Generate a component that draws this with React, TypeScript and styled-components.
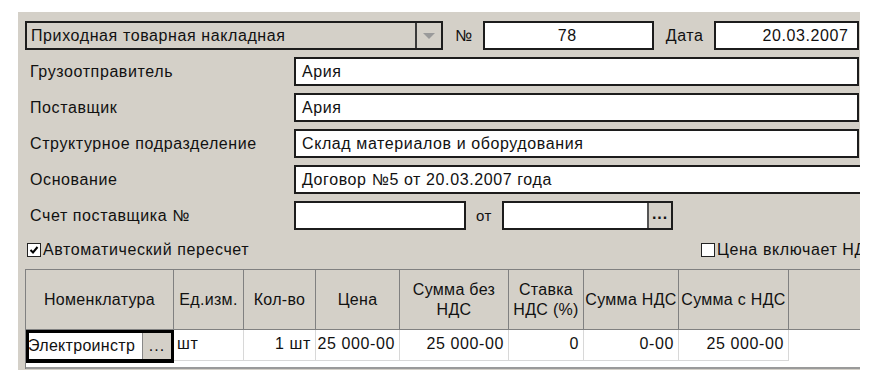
import styled, { createGlobalStyle } from 'styled-components'

//base page: white with the grey form panel cut off on the right
const GlobalStyle = createGlobalStyle`
  html, body {
    margin: 0;
    padding: 0;
    background: #ffffff;
  }
  body {
    font-family: "Liberation Sans", Arial, sans-serif;
    font-size: 16px;
    letter-spacing: 0.6px;
    color: #111;
  }
`

interface Column {
  title: string[];
  width: number;
  value: string;
  align: 'left' | 'right';
}

//table columns with the one data row
const columns: Column[] = [
  { title: ['Номенклатура'], width: 148, value: 'Электроинстр', align: 'left' },
  { title: ['Ед.изм.'], width: 70, value: 'шт', align: 'left' },
  { title: ['Кол-во'], width: 72, value: '1 шт', align: 'right' },
  { title: ['Цена'], width: 84, value: '25 000-00', align: 'right' },
  { title: ['Сумма без', 'НДС'], width: 109, value: '25 000-00', align: 'right' },
  { title: ['Ставка', 'НДС (%)'], width: 75, value: '0', align: 'right' },
  { title: ['Сумма НДС'], width: 95, value: '0-00', align: 'right' },
  { title: ['Сумма с НДС'], width: 110, value: '25 000-00', align: 'right' },
]

const fields = [
  { label: 'Грузоотправитель', value: 'Ария' },
  { label: 'Поставщик', value: 'Ария' },
  { label: 'Структурное подразделение', value: 'Склад материалов и оборудования' },
  { label: 'Основание', value: 'Договор №5 от 20.03.2007 года', open: true },
]

const App = () => {
  return (
    <>
      <GlobalStyle />
      <Page>
        <Panel>
          <TopRow>
            <Combo>
              <ComboText>Приходная товарная накладная</ComboText>
              <ComboButton>
                <Arrow />
              </ComboButton>
            </Combo>
            <Caption>№</Caption>
            <Input width={171} align="center">78</Input>
            <Caption>Дата</Caption>
            <Input width={145} align="right">20.03.2007</Input>
          </TopRow>

          {fields.map((f) => (
            <FormRow key={f.label}>
              <Label>{f.label}</Label>
              <Input width={f.open ? 580 : 565} open={f.open}>{f.value}</Input>
            </FormRow>
          ))}

          <FormRow>
            <Label>Счет поставщика №</Label>
            <Input width={172} />
            <SmallCaption>от</SmallCaption>
            <Input width={171}>
              <Spacer />
              <DotsButton>...</DotsButton>
            </Input>
          </FormRow>

          <CheckRow>
            <Check>
              <CheckBox>
                <svg width="10" height="10" viewBox="0 0 10 10">
                  <path d="M1.5 5 L4 7.5 L8.5 2" stroke="#000" strokeWidth="2" fill="none" />
                </svg>
              </CheckBox>
              Автоматический пересчет
            </Check>
            <Check>
              <CheckBox />
              Цена включает НДС
            </Check>
          </CheckRow>

          <Table>
            <HeadRow>
              {columns.map((c) => (
                <HeadCell key={c.title.join(' ')} width={c.width}>
                  {c.title.map((t) => (
                    <span key={t}>{t}</span>
                  ))}
                </HeadCell>
              ))}
              <HeadFiller />
            </HeadRow>
            <BodyRow>
              {columns.map((c, i) =>
                i === 0 ? (
                  <ActiveCell key={c.title[0]} width={c.width}>
                    <ActiveText>{c.value}</ActiveText>
                    <CellButton>...</CellButton>
                  </ActiveCell>
                ) : (
                  <Cell key={c.title[0]} width={c.width} align={c.align}>
                    {c.value}
                  </Cell>
                )
              )}
              <BodyFiller />
            </BodyRow>
            <TableBottom />
          </Table>
        </Panel>
      </Page>
    </>
  )
}

//styled components for the form

const Page = styled.div`
  padding: 12px 0 15px 18px;
  width: 863px;
  overflow: hidden;
`

const Panel = styled.div`
  width: 842px;
  height: 358px;
  background: #d4d0c8;
  padding: 9px 0 0 7px;
  box-sizing: border-box;
  overflow: hidden;
`

const TopRow = styled.div`
  display: flex;
  align-items: center;
  height: 29px;
`

const Combo = styled.div`
  display: flex;
  width: 418px;
  height: 29px;
  border: 2px solid #1c1c1c;
  box-sizing: border-box;
  background: #d4d0c8;
`

const ComboText = styled.div`
  flex: 1;
  display: flex;
  align-items: center;
  padding-left: 4px;
  white-space: nowrap;
`

const ComboButton = styled.div`
  width: 24px;
  border-left: 2px solid #3a3a3a;
  display: flex;
  align-items: center;
  justify-content: center;
`

const Arrow = styled.div`
  width: 0;
  height: 0;
  border-left: 6px solid transparent;
  border-right: 6px solid transparent;
  border-top: 6px solid #9a9a9a;
`

const Caption = styled.div`
  padding: 0 10px 0 12px;
  white-space: nowrap;
`

const SmallCaption = styled.div`
  padding: 0 10px 0 10px;
  font-size: 15px;
`

const Input = styled.div<{ width: number; align?: string; open?: boolean }>`
  display: flex;
  align-items: center;
  justify-content: ${(p) => (p.align === 'center' ? 'center' : p.align === 'right' ? 'flex-end' : 'flex-start')};
  width: ${(p) => p.width}px;
  height: 29px;
  flex-shrink: 0;
  box-sizing: border-box;
  background: #fff;
  border: 2px solid #1c1c1c;
  ${(p) => (p.open ? 'border-right: none;' : '')}
  padding: 0 8px 0 6px;
  white-space: nowrap;
`

const Spacer = styled.div`
  flex: 1;
`

const DotsButton = styled.div`
  width: 24px;
  height: 25px;
  margin-right: -8px;
  background: #d4d0c8;
  border-left: 2px solid #555;
  display: flex;
  align-items: center;
  justify-content: center;
  font-weight: bold;
  letter-spacing: 1px;
  line-height: 1;
  padding-bottom: 4px;
  box-sizing: border-box;
`

const FormRow = styled.div`
  display: flex;
  align-items: center;
  height: 29px;
  margin-top: 7px;
`

const Label = styled.div`
  width: 269px;
  flex-shrink: 0;
  padding-left: 5px;
  box-sizing: border-box;
  white-space: nowrap;
`

//second check box starts at a fixed column, its text runs past the panel edge
const CheckRow = styled.div`
  display: grid;
  grid-template-columns: 674px auto;
  align-items: center;
  height: 26px;
  margin-top: 7px;
  white-space: nowrap;
`

const Check = styled.div`
  display: flex;
  align-items: center;
  gap: 2px;
  padding-left: 2px;
`

const CheckBox = styled.div`
  width: 14px;
  height: 14px;
  box-sizing: border-box;
  border: 1.5px solid #222;
  background: #fff;
  display: flex;
  align-items: center;
  justify-content: center;
`

const Table = styled.div`
  margin-top: 6px;
  width: 860px;
  background: #fff;
  border-left: 1px solid #808080;
  border-top: 1px solid #808080;
`

const HeadRow = styled.div`
  display: flex;
  height: 59px;
  background: #d4d0c8;
  border-bottom: 1px solid #808080;
`

const HeadCell = styled.div<{ width: number }>`
  width: ${(p) => p.width}px;
  flex-shrink: 0;
  box-sizing: border-box;
  border-right: 1px solid #808080;
  display: flex;
  flex-direction: column;
  align-items: center;
  justify-content: center;
  text-align: center;
  line-height: 20px;
  letter-spacing: 0.3px;
  white-space: nowrap;
`

const HeadFiller = styled.div`
  flex: 1;
`

const BodyRow = styled.div`
  display: flex;
  height: 31px;
`

const Cell = styled.div<{ width: number; align: string }>`
  width: ${(p) => p.width}px;
  flex-shrink: 0;
  box-sizing: border-box;
  border-right: 1px solid #d8d8d8;
  border-bottom: 1px solid #d8d8d8;
  display: flex;
  align-items: center;
  justify-content: ${(p) => (p.align === 'right' ? 'flex-end' : 'flex-start')};
  padding: 0 ${(p) => (p.align === 'right' ? 4 : 3)}px 2px 3px;
  white-space: nowrap;
`

const ActiveCell = styled.div<{ width: number }>`
  width: ${(p) => p.width}px;
  height: 33px;
  flex-shrink: 0;
  box-sizing: border-box;
  border: 3px solid #000;
  border-bottom-width: 4px;
  display: flex;
  position: relative;
  z-index: 1;
  background: #fff;
`

const ActiveText = styled.div`
  flex: 1;
  overflow: hidden;
  white-space: nowrap;
  display: flex;
  align-items: center;
  margin-left: -1px;
  letter-spacing: 0.3px;
`

const CellButton = styled.div`
  width: 28px;
  background: #d4d0c8;
  border-left: 1px solid #888;
  display: flex;
  align-items: center;
  justify-content: center;
  letter-spacing: 1px;
`

const BodyFiller = styled.div`
  flex: 1;
`

const TableBottom = styled.div`
  height: 6px;
  border-bottom: 2px solid #9a9a9a;
`

export default App
